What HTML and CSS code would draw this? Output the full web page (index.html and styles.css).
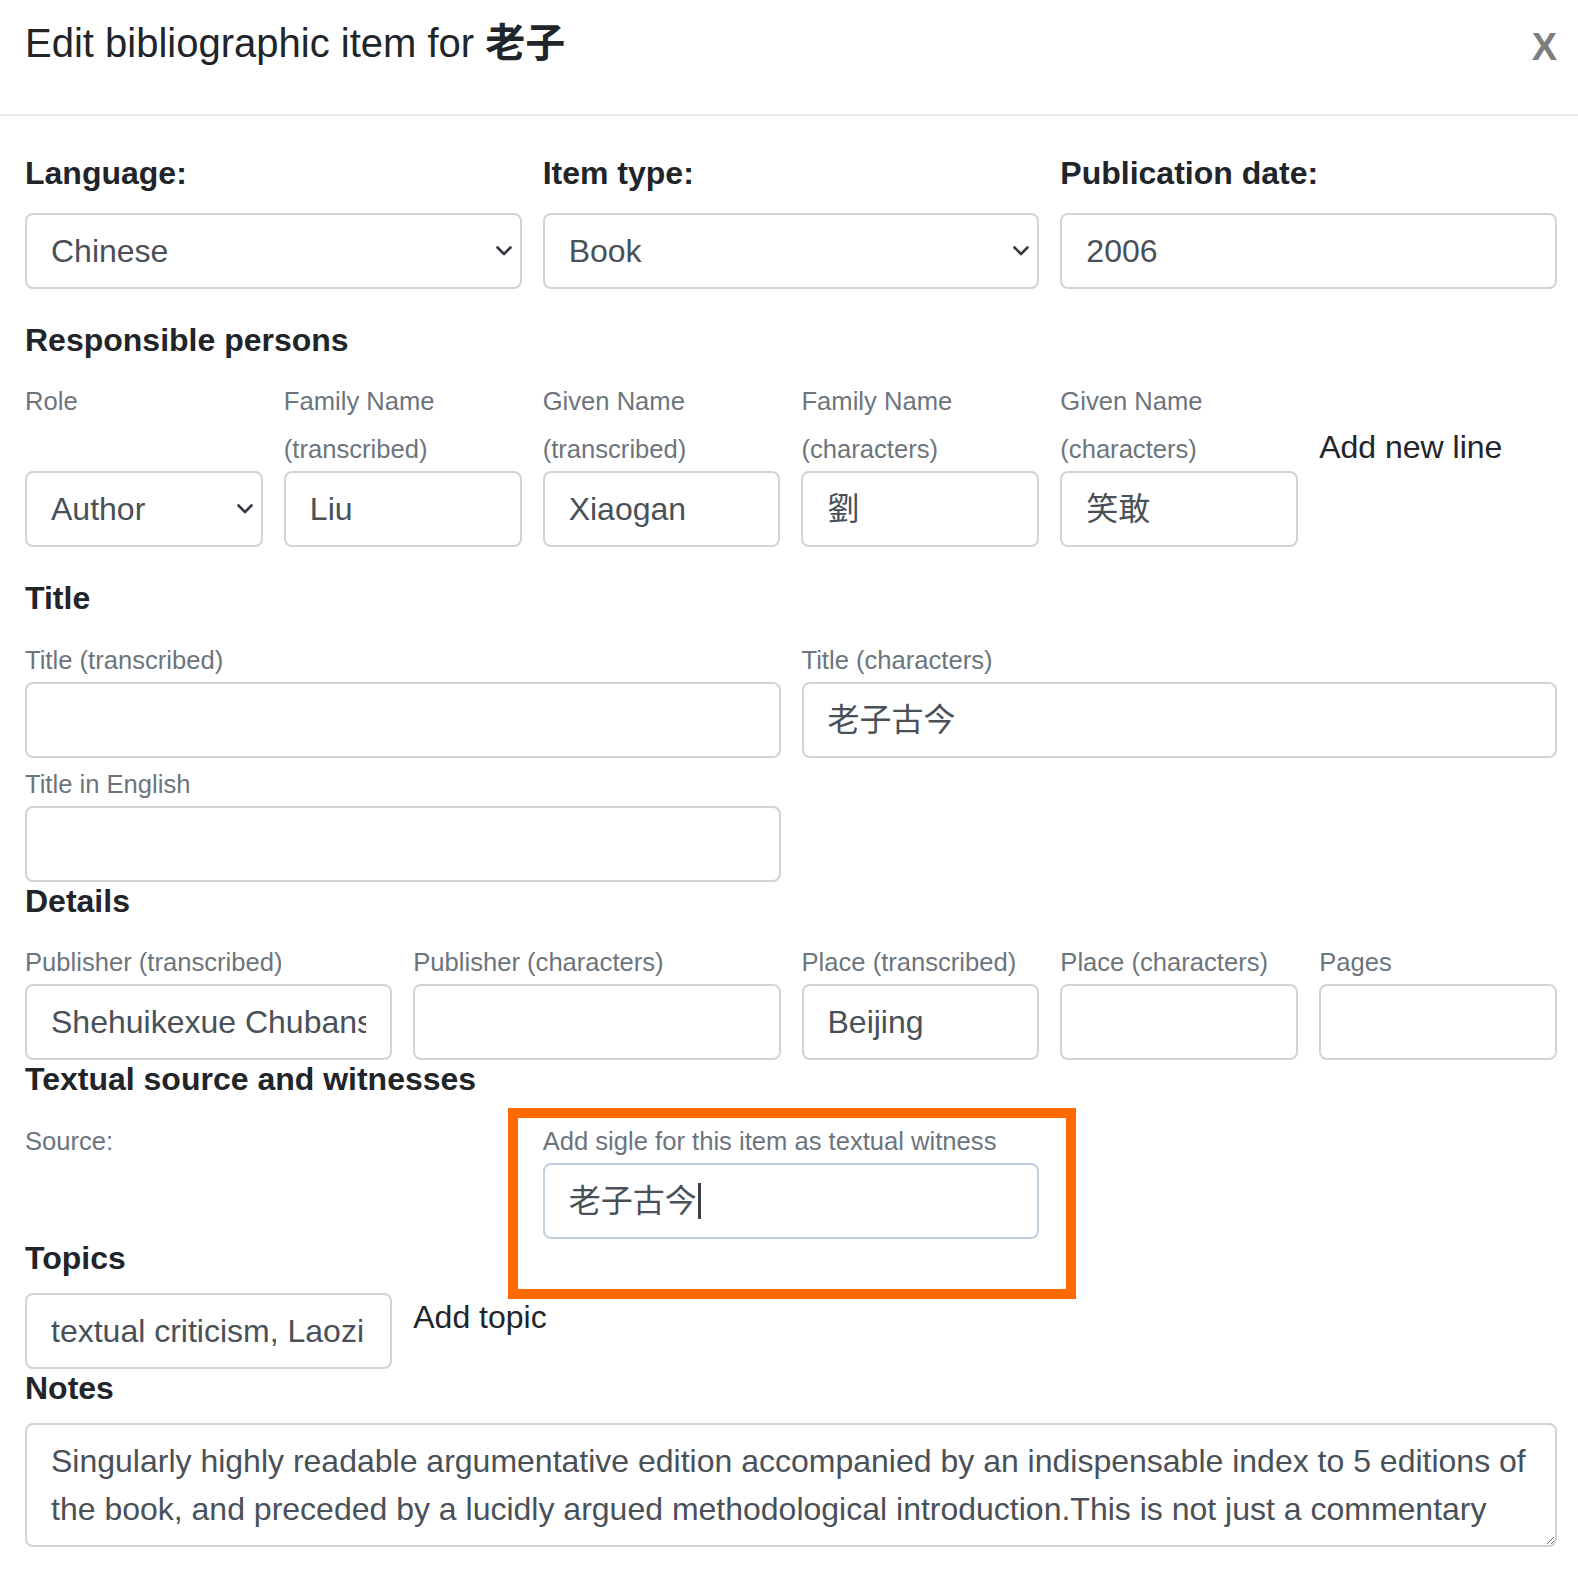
FILE: index.html
```html
<!DOCTYPE html>
<html lang="en">
<head>
<meta charset="utf-8">
<title>Edit bibliographic item</title>
<link rel="stylesheet" href="styles.css">
</head>
<body>
<div class="modal">
  <header class="modal-header">
    <h1 class="modal-title">Edit bibliographic item for <b class="cjk-bold">老子</b></h1>
    <span class="close">X</span>
  </header>
  <main class="modal-body">
    <div class="row mb">
      <div class="c4">
        <label class="big-label">Language:</label>
        <div class="fc select"><span>Chinese</span><svg class="chev" width="16" height="10" viewBox="0 0 16 10"><polyline points="1.5,1.5 8,8 14.5,1.5" fill="none" stroke="#343a40" stroke-width="2.6" stroke-linecap="round" stroke-linejoin="round"/></svg></div>
      </div>
      <div class="c4">
        <label class="big-label">Item type:</label>
        <div class="fc select"><span>Book</span><svg class="chev" width="16" height="10" viewBox="0 0 16 10"><polyline points="1.5,1.5 8,8 14.5,1.5" fill="none" stroke="#343a40" stroke-width="2.6" stroke-linecap="round" stroke-linejoin="round"/></svg></div>
      </div>
      <div class="c4">
        <label class="big-label">Publication date:</label>
        <input class="fc" type="text" value="2006" readonly>
      </div>
    </div>

    <h2 class="sec">Responsible persons</h2>
    <div class="row mb">
      <div class="c2">
        <label class="lbl"><small>Role<br>&nbsp;</small></label>
        <div class="fc select"><span>Author</span><svg class="chev" width="16" height="10" viewBox="0 0 16 10"><polyline points="1.5,1.5 8,8 14.5,1.5" fill="none" stroke="#343a40" stroke-width="2.6" stroke-linecap="round" stroke-linejoin="round"/></svg></div>
      </div>
      <div class="c2">
        <label class="lbl"><small>Family Name<br>(transcribed)</small></label>
        <input class="fc" type="text" value="Liu" readonly>
      </div>
      <div class="c2">
        <label class="lbl"><small>Given Name<br>(transcribed)</small></label>
        <input class="fc" type="text" value="Xiaogan" readonly>
      </div>
      <div class="c2">
        <label class="lbl"><small>Family Name<br>(characters)</small></label>
        <input class="fc cjk" type="text" value="劉" readonly>
      </div>
      <div class="c2">
        <label class="lbl"><small>Given Name<br>(characters)</small></label>
        <input class="fc cjk" type="text" value="笑敢" readonly>
      </div>
      <div class="c2 add-line">Add new line</div>
    </div>

    <h2 class="sec">Title</h2>
    <div class="row">
      <div class="c6">
        <label class="lbl"><small>Title (transcribed)</small></label>
        <input class="fc" type="text" value="" readonly>
      </div>
      <div class="c6">
        <label class="lbl"><small>Title (characters)</small></label>
        <input class="fc cjk" type="text" value="老子古今" readonly>
      </div>
      <div class="c6">
        <label class="lbl"><small>Title in English</small></label>
        <input class="fc" type="text" value="" readonly>
      </div>
    </div>

    <h2 class="sec">Details</h2>
    <div class="row">
      <div class="c3">
        <label class="lbl"><small>Publisher (transcribed)</small></label>
        <input class="fc" type="text" value="Shehuikexue Chubanshe" readonly>
      </div>
      <div class="c3">
        <label class="lbl"><small>Publisher (characters)</small></label>
        <input class="fc" type="text" value="" readonly>
      </div>
      <div class="c2">
        <label class="lbl"><small>Place (transcribed)</small></label>
        <input class="fc" type="text" value="Beijing" readonly>
      </div>
      <div class="c2">
        <label class="lbl"><small>Place (characters)</small></label>
        <input class="fc" type="text" value="" readonly>
      </div>
      <div class="c2">
        <label class="lbl"><small>Pages</small></label>
        <input class="fc" type="text" value="" readonly>
      </div>
    </div>

    <h2 class="sec">Textual source and witnesses</h2>
    <div class="row">
      <div class="c4">
        <label class="lbl"><small>Source:</small></label>
      </div>
      <div class="c4">
        <label class="lbl"><small>Add sigle for this item as textual witness</small></label>
        <div class="fc focused"><span>老子古今</span><span class="caret"></span></div>
      </div>
    </div>

    <h2 class="sec">Topics</h2>
    <div class="row">
      <div class="c3">
        <input class="fc" type="text" value="textual criticism, Laozi, Daodejing" readonly>
      </div>
      <div class="c3 add-topic">Add topic</div>
    </div>

    <h2 class="sec">Notes</h2>
    <textarea class="fc notes" rows="2" readonly>Singularly highly readable argumentative edition accompanied by an indispensable index to 5 editions of the book, and preceded by a lucidly argued methodological introduction.This is not just a commentary</textarea>
  </main>
</div>
<div class="annotation"></div>
</body>
</html>
```

FILE: styles.css
```css
* {
  box-sizing: border-box;
}

html, body {
  margin: 0;
  padding: 0;
  background: #fff;
}

body {
  font-family: "Liberation Sans", "Noto Sans CJK SC", Arial, sans-serif;
  color: #212529;
  width: 1578px;
  min-height: 1570px;
  overflow: hidden;
}

.modal-header {
  display: flex;
  justify-content: space-between;
  align-items: flex-start;
  height: 116px;
  padding: 10px 21px 0 25px;
  border-bottom: 2px solid #e9ecef;
}

.modal-title {
  margin: 0;
  font-size: 40px;
  font-weight: 400;
  line-height: 60px;
}

.cjk-bold {
  font-family: "Noto Sans CJK SC", sans-serif;
  font-weight: 700;
}

.close {
  font-size: 38px;
  font-weight: 700;
  line-height: 60px;
  margin-top: 7px;
  color: #7e7e7e;
}

.modal-body {
  padding: 33px 21px 0 25px;
}

.row {
  display: grid;
  grid-template-columns: repeat(12, minmax(0, 1fr));
  column-gap: 21px;
}

.mb {
  margin-bottom: 32px;
}

.c2 { grid-column: span 2; }
.c3 { grid-column: span 3; }
.c4 { grid-column: span 4; }
.c6 { grid-column: span 6; }

.big-label {
  display: block;
  font-size: 32px;
  font-weight: 700;
  line-height: 48px;
  margin-bottom: 16px;
}

.sec {
  margin: 0 0 16px;
  font-size: 32px;
  font-weight: 700;
  line-height: 38.4px;
}

.lbl {
  display: block;
  font-size: 32px;
  line-height: 48px;
}

.lbl small {
  font-size: 0.8em;
  line-height: 1;
  color: #6c757d;
}

.fc {
  display: block;
  width: 100%;
  height: 76px;
  margin: 0;
  padding: 12px 24px;
  font-family: "Liberation Sans", "Noto Sans CJK SC", Arial, sans-serif;
  font-size: 32px;
  line-height: 48px;
  color: #495057;
  background: #fff;
  border: 2px solid #ced4da;
  border-radius: 8px;
  outline: none;
}

.fc.cjk {
  padding-top: 9px;
  padding-bottom: 15px;
}

.select {
  display: flex;
  align-items: center;
  justify-content: space-between;
  padding-right: 8px;
}

.chev {
  display: block;
  flex: none;
}

.focused {
  display: flex;
  align-items: center;
  border-color: #c2cfdf;
}

.caret {
  display: inline-block;
  width: 3px;
  height: 36px;
  margin-left: 1px;
  background: #3b4148;
}

.add-line {
  padding-top: 48px;
  font-size: 32px;
  line-height: 48px;
  white-space: nowrap;
}

.add-topic {
  font-size: 32px;
  line-height: 48px;
  white-space: nowrap;
}

.notes {
  height: 124px;
  resize: vertical;
  overflow: hidden;
}

.annotation {
  position: absolute;
  left: 508px;
  top: 1108px;
  width: 568px;
  height: 191px;
  border: 10px solid #ff6a00;
  pointer-events: none;
}
```
